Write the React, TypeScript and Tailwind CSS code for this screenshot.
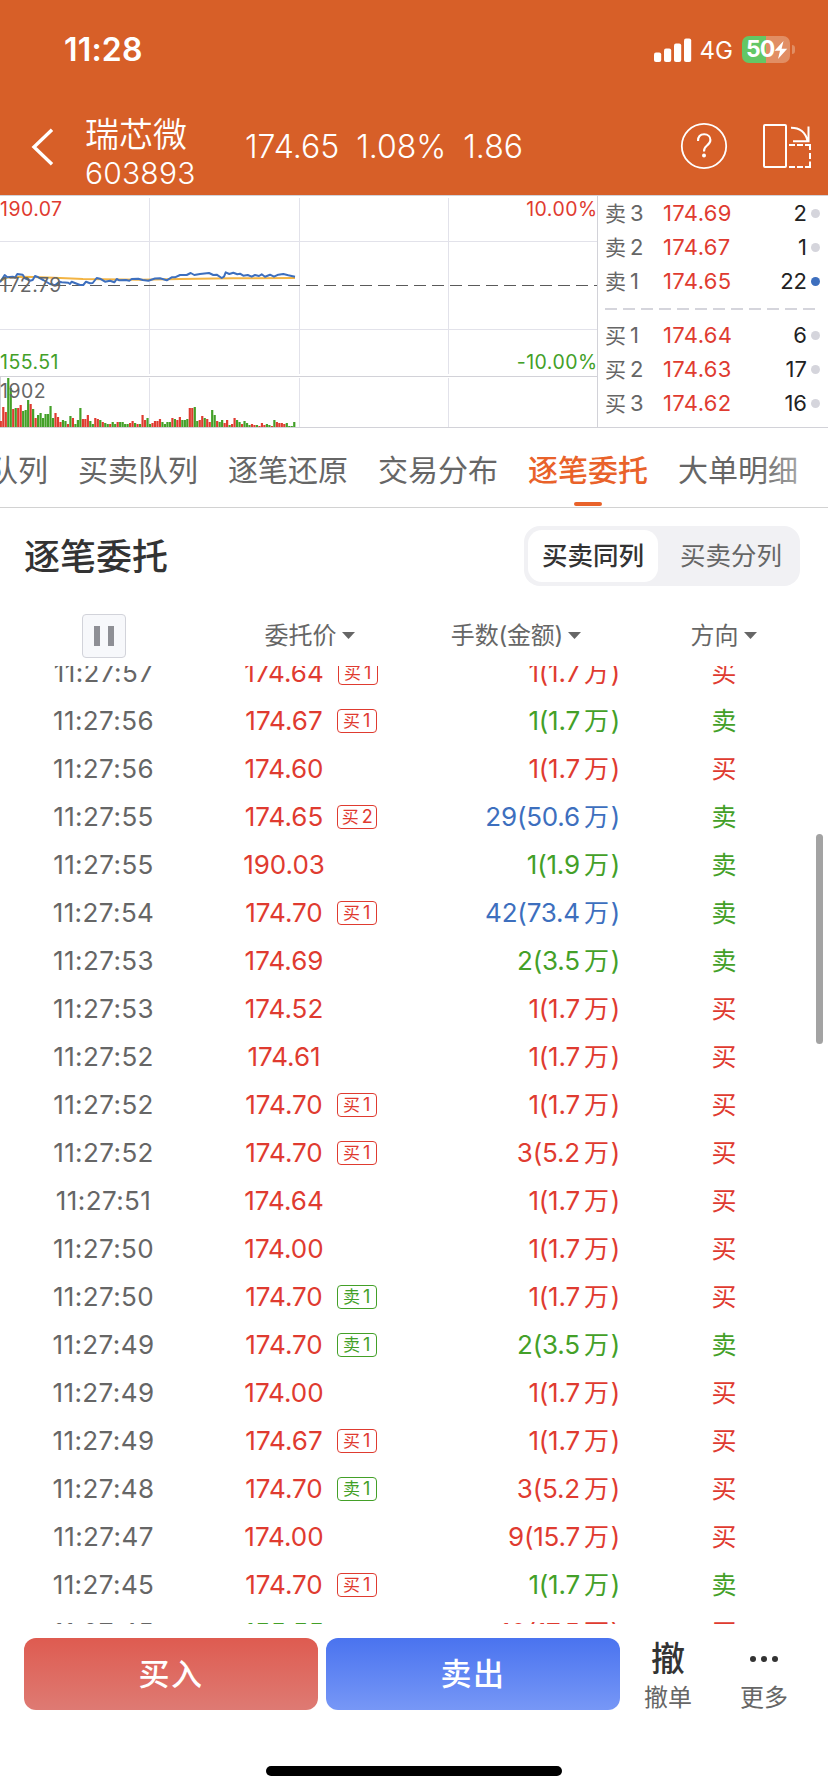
import React from 'react';

type Color = 'red' | 'green' | 'blue';

const textColor: Record<Color, string> = {
  red: 'text-[#df3b30]',
  green: 'text-[#43a028]',
  blue: 'text-[#3d6fbe]',
};

const asks = [
  { label: '卖', level: '3', price: '174.69', volume: '2', dot: 'bg-[#d5d5dc]' },
  { label: '卖', level: '2', price: '174.67', volume: '1', dot: 'bg-[#d5d5dc]' },
  { label: '卖', level: '1', price: '174.65', volume: '22', dot: 'bg-[#3d6fbe]' },
];

const bids = [
  { label: '买', level: '1', price: '174.64', volume: '6', dot: 'bg-[#d5d5dc]' },
  { label: '买', level: '2', price: '174.63', volume: '17', dot: 'bg-[#d5d5dc]' },
  { label: '买', level: '3', price: '174.62', volume: '16', dot: 'bg-[#d5d5dc]' },
];

const tabs = ['千档队列', '买卖队列', '逐笔还原', '交易分布', '逐笔委托', '大单明细'];

interface Order {
  time: string;
  price: string;
  priceColor?: Color;
  tag?: string;
  lots: string;
  amount: string;
  color: Color;
  side: '买' | '卖';
}

const orders: Order[] = [
  { time: '11:27:57', price: '174.64', tag: '买1', lots: '1', amount: '1.7', color: 'red', side: '买' },
  { time: '11:27:56', price: '174.67', tag: '买1', lots: '1', amount: '1.7', color: 'green', side: '卖' },
  { time: '11:27:56', price: '174.60', lots: '1', amount: '1.7', color: 'red', side: '买' },
  { time: '11:27:55', price: '174.65', tag: '买2', lots: '29', amount: '50.6', color: 'blue', side: '卖' },
  { time: '11:27:55', price: '190.03', lots: '1', amount: '1.9', color: 'green', side: '卖' },
  { time: '11:27:54', price: '174.70', tag: '买1', lots: '42', amount: '73.4', color: 'blue', side: '卖' },
  { time: '11:27:53', price: '174.69', lots: '2', amount: '3.5', color: 'green', side: '卖' },
  { time: '11:27:53', price: '174.52', lots: '1', amount: '1.7', color: 'red', side: '买' },
  { time: '11:27:52', price: '174.61', lots: '1', amount: '1.7', color: 'red', side: '买' },
  { time: '11:27:52', price: '174.70', tag: '买1', lots: '1', amount: '1.7', color: 'red', side: '买' },
  { time: '11:27:52', price: '174.70', tag: '买1', lots: '3', amount: '5.2', color: 'red', side: '买' },
  { time: '11:27:51', price: '174.64', lots: '1', amount: '1.7', color: 'red', side: '买' },
  { time: '11:27:50', price: '174.00', lots: '1', amount: '1.7', color: 'red', side: '买' },
  { time: '11:27:50', price: '174.70', tag: '卖1', lots: '1', amount: '1.7', color: 'red', side: '买' },
  { time: '11:27:49', price: '174.70', tag: '卖1', lots: '2', amount: '3.5', color: 'green', side: '卖' },
  { time: '11:27:49', price: '174.00', lots: '1', amount: '1.7', color: 'red', side: '买' },
  { time: '11:27:49', price: '174.67', tag: '买1', lots: '1', amount: '1.7', color: 'red', side: '买' },
  { time: '11:27:48', price: '174.70', tag: '卖1', lots: '3', amount: '5.2', color: 'red', side: '买' },
  { time: '11:27:47', price: '174.00', lots: '9', amount: '15.7', color: 'red', side: '买' },
  { time: '11:27:45', price: '174.70', tag: '买1', lots: '1', amount: '1.7', color: 'green', side: '卖' },
  { time: '11:27:45', price: '155.55', priceColor: 'green', lots: '10', amount: '17.5', color: 'red', side: '买' },
];

// one entry per minute: r = up, g = down, followed by the bar height
const volumes =
  'r6 r20 r15 g49 g39 r18 g19 r19 r22 g16 g17 g27 r23 g18 r9 g12 g14 g9 g13 g13 g21 g9 r14 r10 r5 g7 g6 r3 g11 r9 g3 g7 g19 r8 r8 r12 g6 g3 r9 r8 g7 r5 g4 g3 r3 g5 g3 r5 g5 g5 g3 g3 r4 r6 g4 r3 g3 r12 r7 g9 g3 r4 r6 r6 r8 g5 g3 g5 g5 r9 g8 r7 r10 g7 g7 g8 r19 r19 g20 g6 r7 r11 g9 r8 r5 g17 g12 r6 g5 g7 r4 r7 g2 r3 r9 g7 g5 r3 g6 g4 g2 r3 r2 g2 r1 r4 r2 g3 g2 r1 g7 r5 r4 r4 r3 g4 g1 g1 g5'.split(' ');

const Back = () => (
  <svg width="24" height="40" viewBox="0 0 24 40" fill="none" stroke="#fff" strokeWidth="3.4">
    <path d="M21 2.8 L3 20 L21 37.2" />
  </svg>
);

const Help = () => (
  <svg width="48" height="48" viewBox="0 0 48 48" fill="none" stroke="#fff">
    <circle cx="24" cy="24" r="22.2" strokeWidth="1.8" />
    <path d="M18 19 C18 14.5 20.5 12.3 24.2 12.3 C28 12.3 30.4 14.8 30.4 18 C30.4 21 28.6 22.3 26.5 24 C24.7 25.4 24 26.5 24 29.4" strokeWidth="2.1" />
    <circle cx="24" cy="33.4" r="2" fill="#fff" stroke="none" />
  </svg>
);

const Rotate = () => (
  <svg width="50" height="46" viewBox="0 0 50 46" fill="none" stroke="#fff" strokeWidth="2">
    <rect x="2" y="2" width="22" height="42" rx="1" />
    <path d="M29 4.8 C37.5 4.8 43.5 9.5 45.6 18 M46.5 3.5 V18.3 H31" />
    <path d="M27 22 H33 M35 22 H41 M43 22 H48 V27 M48 30 V36 M48 38.5 V44 H43 M41 44 H35 M33 44 H27" />
  </svg>
);

const Header: React.FC = () => (
  <header className="h-[195px] bg-[#d75f28] text-white">
    <div className="flex h-[99px] items-center pl-[64px] pr-[33px]">
      <span className="text-[32px] font-semibold leading-none tracking-[0.2px]">11:28</span>
      <div className="ml-auto flex items-center">
        <svg width="38" height="24" viewBox="0 0 38 24" fill="#fff">
          <rect x="0" y="14.5" width="7.2" height="9.5" rx="2" />
          <rect x="10" y="10.5" width="7.2" height="13.5" rx="2" />
          <rect x="20" y="5.5" width="7.2" height="18.5" rx="2" />
          <rect x="30" y="0.5" width="7.2" height="23.5" rx="2" />
        </svg>
        <span className="ml-[8px] mt-[3px] text-[24px] leading-none">4G</span>
        <div className="ml-[9px] flex h-[27px] w-[48px] items-center rounded-[7px] bg-linear-to-r from-[#63c765] from-50% to-[#e18e64] to-50% pl-[4px]">
          <span className="text-[23px] font-bold leading-none tracking-[-1px]">50</span>
          <svg width="14" height="18" viewBox="0 0 14 18" fill="#fff">
            <path d="M9.5 0 L0.5 9.8 H6 L4 18 L13.2 7.8 H7.6 Z" />
          </svg>
        </div>
        <span className="ml-[2px] h-[9px] w-[3px] rounded-r-full bg-[#e18e64]" />
      </div>
    </div>
    <div className="flex h-[96px] items-center pl-[31px] pr-[16px]">
      <Back />
      <div className="ml-[30px] flex w-[160px] flex-col pt-[7px]">
        <span className="text-[34px] font-[350] leading-[44px]">瑞芯微</span>
        <span className="text-[30px] font-[350] leading-[32px] tracking-[0.2px]">603893</span>
      </div>
      <div className="-mt-px flex gap-[17px] text-[32px] font-[350] leading-none">
        <span>174.65</span>
        <span>1.08%</span>
        <span>1.86</span>
      </div>
      <div className="-mt-[2px] ml-auto flex items-center gap-[34px]">
        <Help />
        <Rotate />
      </div>
    </div>
  </header>
);

const Chart: React.FC = () => (
  <svg width="597" height="233" viewBox="0 195 597 233" fontSize="19.5" letterSpacing="0.45">
    <g stroke="#e2e2ea">
      <path d="M149.5 198 V374 M299.5 198 V374 M448.5 198 V374 M149.5 378 V427 M299.5 378 V427 M448.5 378 V427" />
      <path d="M0 241.5 H597 M0 329.5 H597" />
    </g>
    <path d="M0 376.5 H597 M0.5 377 V427" stroke="#d2d2d8" />
    <path d="M0 285.5 H597" stroke="#5a5a5a" strokeDasharray="12 6" />
    {volumes.map((bar, i) => {
      const height = Number(bar.slice(1));
      return (
        <rect
          key={i}
          x={i * 2.487 - 0.3}
          y={427 - height}
          width="2.2"
          height={height}
          fill={bar[0] === 'r' ? '#df3b30' : '#43a028'}
        />
      );
    })}
    <polyline
      fill="none"
      stroke="#f3b443"
      strokeWidth="2"
      points="0,281 7,277.5 20,276.7 33,277 60,278 83,279 140,279.8 180,279 233,278.3 295,278"
    />
    <polyline
      fill="none"
      stroke="#3d6fbe"
      strokeWidth="2"
      strokeLinejoin="round"
      points="0,282.3 4.7,275 7.3,277.3 12.7,276.7 15,277.7 17.3,274 22.7,274.7 25,278.3 30,280.7 32.7,280 35,276 38.3,277.3 43.3,280 50,284 55,285.3 59.3,281.7 61.7,282.3 68.3,282.7 70,284 71.7,281.7 80,285 83.3,285 86,281.7 90,283.3 92.7,283 96.7,278 100,278.7 105,281.7 110,280.7 114.3,282.3 116.7,279 119.3,280.3 126,280 129.3,280.7 131.7,279 138.3,278.7 142.7,280 148.3,280.7 155,278.5 160,278.3 166.7,280.3 171.7,277.3 175,277.3 180,275 186.7,275 190.7,273 194.3,275 200,274 209,273 213.3,275 216.7,274.7 221.7,278 224,276.7 225.7,272.3 229.3,274 233.3,272.7 237.3,274.3 240,273.7 243.3,275.7 247.7,275 251.7,276.7 255,275 259,276 261.7,274.3 265,276.7 270,274.7 274,276.7 278.3,274.7 283.3,274 288.3,275.3 295,276.7"
    />
    <text x="0" y="215.7" fill="#df3b30">190.07</text>
    <text x="597.5" y="215.7" fill="#df3b30" textAnchor="end">10.00%</text>
    <text x="0" y="291.5" fill="#666">172.79</text>
    <text x="0" y="368.7" fill="#43a028">155.51</text>
    <text x="597.5" y="368.7" fill="#43a028" textAnchor="end">-10.00%</text>
    <text x="0" y="397.7" fill="#666">1902</text>
  </svg>
);

const QuoteRow: React.FC<{ row: (typeof asks)[number] }> = ({ row }) => (
  <div className="flex h-[34px] items-center text-[22px] leading-none">
    <span className="w-[25px] text-[21px] text-[#666]">{row.label}</span>
    <span className="w-[33px] text-[#666]">{row.level}</span>
    <span className="w-[72px] tracking-[0.35px] text-[#df3b30]">{row.price}</span>
    <span className="ml-auto text-[#222]">{row.volume}</span>
    <span className={`ml-[4px] h-[9px] w-[9px] rounded-full ${row.dot}`} />
  </div>
);

const Arrow = () => (
  <svg width="13" height="7" viewBox="0 0 13 7" fill="#666" className="ml-[5px]">
    <path d="M0 0 H13 L6.5 7 Z" />
  </svg>
);

const OrderRow: React.FC<{ order: Order }> = ({ order }) => {
  const tagColor = order.tag?.[0] === '卖' ? 'border-[#43a028] text-[#43a028]' : 'border-[#df3b30] text-[#df3b30]';
  return (
    <div className="flex h-[48px] shrink-0 items-center text-[26px] leading-none">
      <span className="w-[207px] text-center tracking-[0.4px] text-[#666]">{order.time}</span>
      <div className="grid w-[154px] grid-cols-[minmax(0,1fr)_auto_minmax(0,1fr)] items-center">
        <span />
        <span className={textColor[order.priceColor ?? 'red']}>{order.price}</span>
        {order.tag && (
          <span className={`ml-[14px] flex h-[24px] w-[40px] items-center justify-center gap-[3px] rounded-[4px] border text-[18px] ${tagColor}`}>
            <span className="text-[17px]">{order.tag[0]}</span>
            <span>{order.tag[1]}</span>
          </span>
        )}
      </div>
      <span className={`w-[259px] text-right tracking-[-0.2px] ${textColor[order.color]}`}>
        {order.lots}({order.amount}
        <span className="ml-[4px] mr-[2px] text-[25px]">万</span>)
      </span>
      <span className={`w-[208px] text-center text-[25px] ${order.side === '买' ? textColor.red : textColor.green}`}>
        {order.side}
      </span>
    </div>
  );
};

const App: React.FC = () => {
  return (
    <div className="flex h-[1792px] w-[828px] flex-col overflow-hidden bg-white font-[Inter,'Noto_Sans_CJK_SC',sans-serif]">
      <Header />

      {/* Mini chart and order book */}
      <section className="flex h-[233px] border-y border-[#d2d2d8]">
        <div className="-my-px w-[597px]">
          <Chart />
        </div>
        <div className="flex-1 border-l border-[#d2d2d8] pl-[7px] pr-[8px]">
          {asks.map((row) => (
            <QuoteRow key={row.level} row={row} />
          ))}
          <svg width="211" height="20" className="block">
            <path d="M0 11 H211" stroke="#d5d5dc" strokeWidth="2" strokeDasharray="12 6" />
          </svg>
          {bids.map((row) => (
            <QuoteRow key={row.level} row={row} />
          ))}
        </div>
      </section>

      {/* Tabs */}
      <nav className="relative flex h-[80px] justify-end overflow-hidden border-b border-[#d2d2d2] pr-[30px]">
        {tabs.map((tab) => {
          const active = tab === '逐笔委托';
          return (
            <div key={tab} className="ml-[30px] flex w-[120px] shrink-0 flex-col items-center text-[30px]">
              <span className={active ? 'mt-[20px] font-medium leading-[44px] text-[#e9622a]' : 'mt-[20px] leading-[44px] text-[#666]'}>
                {tab}
              </span>
              {active && <span className="mt-[10px] h-[4px] w-[28px] rounded-full bg-[#e9622a]" />}
            </div>
          );
        })}
        <div className="absolute right-0 top-0 h-full w-[72px] bg-linear-to-r from-white/0 to-white/70" />
      </nav>

      <div className="flex h-[96px] items-center pl-[24px] pr-[28px]">
        <h1 className="pt-[2px] text-[36px] font-medium text-[#333]">逐笔委托</h1>
        <div className="ml-auto flex h-[60px] w-[276px] items-center rounded-[16px] bg-[#f1f1f4] p-[4px] text-[25.5px] text-[#666]">
          <span className="flex h-[52px] w-[130px] items-center justify-center rounded-[14px] bg-white font-medium text-[#333]">
            买卖同列
          </span>
          <span className="flex-1 pl-[8px] text-center">买卖分列</span>
        </div>
      </div>

      {/* Column titles */}
      <div className="flex h-[62px] items-center pt-px text-[24px] text-[#666]">
        <div className="flex w-[208px] justify-center">
          <div className="flex h-[44px] w-[44px] items-center justify-center gap-[8px] rounded-[4px] border border-[#d2d3da] bg-[#f7f8fb]">
            <span className="h-[20px] w-[6px] bg-[#8e8f95]" />
            <span className="h-[20px] w-[6px] bg-[#8e8f95]" />
          </div>
        </div>
        <div className="flex w-[203px] items-center justify-center">委托价<Arrow /></div>
        <div className="flex w-[210px] items-center justify-center tracking-[-0.2px]">手数(金额)<Arrow /></div>
        <div className="flex w-[205px] items-center justify-center">方向<Arrow /></div>
      </div>

      {/* Order list, scrolled by part of a row */}
      <div className="relative h-[958px] overflow-hidden">
        <div className="-mt-[17px] flex flex-col">
          {orders.map((order, index) => (
            <OrderRow key={index} order={order} />
          ))}
        </div>
        <div className="absolute right-[5px] top-[168px] h-[210px] w-[7px] rounded-full bg-[#a3a3a3]" />
      </div>

      {/* Bottom actions */}
      <footer className="flex pl-[24px] pt-[14px]">
        <button className="h-[72px] w-[294px] rounded-[12px] bg-linear-to-b from-[#de5b50] to-[#de7a73] text-[31px] font-medium tracking-[1.5px] text-white">
          买入
        </button>
        <button className="ml-[8px] h-[72px] w-[294px] rounded-[12px] bg-linear-to-b from-[#4a73ef] to-[#7797f6] text-[31px] font-medium tracking-[1.5px] text-white">
          卖出
        </button>
        <div className="flex w-[96px] flex-col items-center">
          <span className="text-[34px] font-medium leading-[42px] text-[#333]">撤</span>
          <span className="mt-[4px] text-[24px] leading-[28px] text-[#666]">撤单</span>
        </div>
        <div className="flex w-[96px] flex-col items-center">
          <div className="flex h-[42px] items-center gap-[5px]">
            <span className="h-[6px] w-[6px] rounded-full bg-[#333]" />
            <span className="h-[6px] w-[6px] rounded-full bg-[#333]" />
            <span className="h-[6px] w-[6px] rounded-full bg-[#333]" />
          </div>
          <span className="mt-[4px] text-[24px] leading-[28px] text-[#666]">更多</span>
        </div>
      </footer>
      <div className="mx-auto mt-[54px] h-[10px] w-[296px] shrink-0 rounded-full bg-black" />
    </div>
  );
};

export default App;
